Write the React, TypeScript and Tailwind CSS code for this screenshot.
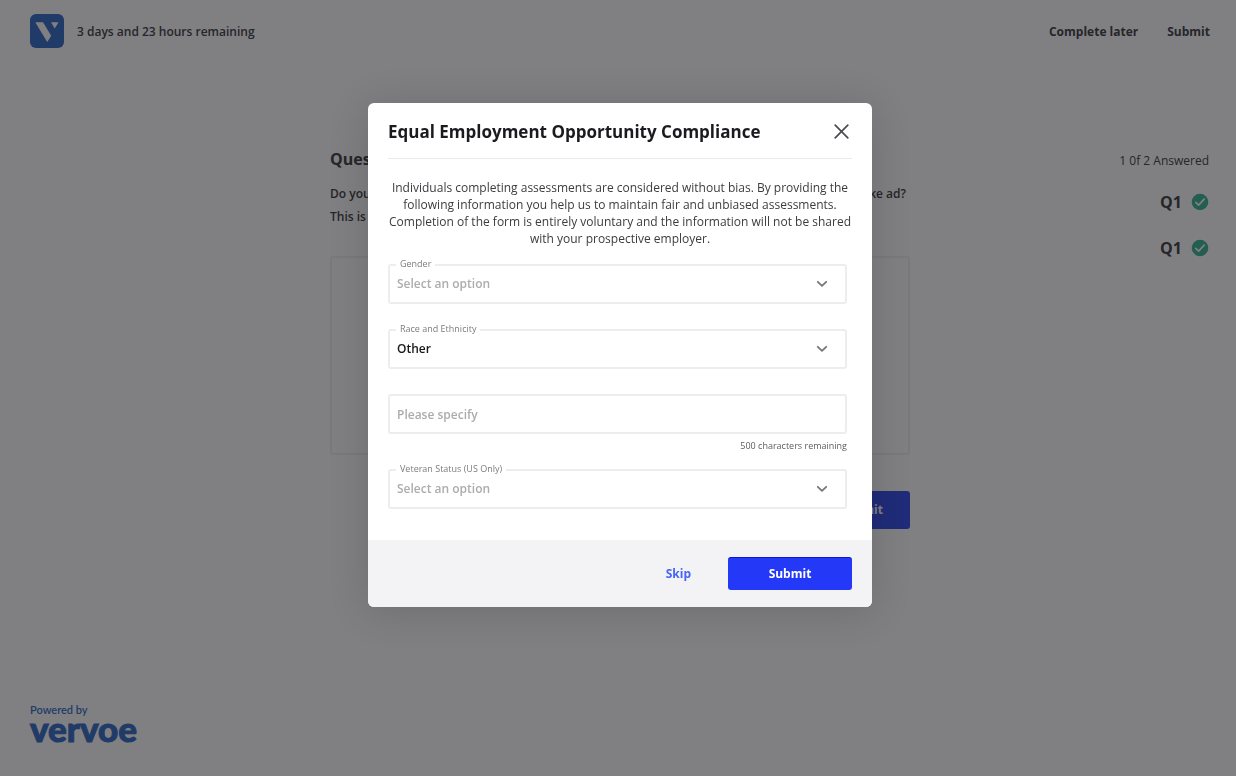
import { useState } from "react";

function BrandMark() {
  return (
    <svg viewBox="0 0 34 34" className="size-[34px]" aria-hidden="true">
      <rect width="34" height="34" rx="6" fill="#3f74c8" />
      <path d="M5.3 8.3h7.7l8.2 13.4-4 6.4z" fill="#fff" />
      <path d="M21 8.3h7.6l-3.9 6.3z" fill="#fff" />
    </svg>
  );
}

function CheckCircle() {
  return (
    <svg viewBox="0 0 18 18" className="size-[18px]" role="img" aria-label="Answered">
      <circle cx="9" cy="9" r="8.3" fill="#46bb9b" />
      <path d="M4.8 9.4l2.8 2.7 5.6-6" fill="none" stroke="#fff" strokeWidth="1.6" strokeLinecap="round" strokeLinejoin="round" />
    </svg>
  );
}

function Chevron() {
  return (
    <svg viewBox="0 0 12 8" className="pointer-events-none absolute right-[19px] top-4 h-2 w-3" aria-hidden="true">
      <path d="M1.8 1.8L6 5.8l4.2-4" fill="none" stroke="#77777b" strokeWidth="1.8" strokeLinecap="round" strokeLinejoin="round" />
    </svg>
  );
}

type SelectFieldProps = {
  id: string;
  label: string;
  options: string[];
  value: string;
  onChange: (value: string) => void;
};

function SelectField({ id, label, options, value, onChange }: SelectFieldProps) {
  return (
    <div className="relative">
      <label htmlFor={id} className="absolute -top-1.5 left-2 z-10 bg-white px-1 text-[9px] font-medium leading-3 text-[#7c7c80]">
        {label}
      </label>
      <select
        id={id}
        value={value}
        onChange={(e) => onChange(e.target.value)}
        className={`block h-10 w-full appearance-none rounded-[3px] border-2 border-[#ebedef] bg-white px-[7px] text-[12px] font-semibold ${value ? "text-[#18181b]" : "text-[#acacaf]"}`}
      >
        <option value="">Select an option</option>
        {options.map((o) => (
          <option key={o}>{o}</option>
        ))}
      </select>
      <Chevron />
    </div>
  );
}

function AssessmentPage() {
  return (
    <div className="flex min-h-screen flex-col bg-white text-[#4a4a50]">
      <header className="flex items-center justify-between pl-[30px] pr-[26px] pt-3.5">
        <div className="flex items-center gap-[13px]">
          <BrandMark />
          <span className="pt-0.5 text-[12px] font-semibold">3 days and 23 hours remaining</span>
        </div>
        <nav className="flex gap-[29px] pt-0.5 text-[12px] font-bold">
          <button type="button">Complete later</button>
          <button type="button">Submit</button>
        </nav>
      </header>

      <main className="grid grid-cols-[1fr_580px_1fr] pl-1 pt-[99px]">
        <section className="col-start-2">
          <h1 className="text-[16px] font-bold leading-6">Question 1</h1>
          <p className="mt-3 flex justify-between pr-1 text-[12px] font-semibold leading-[22px]">
            <span>Do you think</span>
            <span>you could write a Nike ad?</span>
          </p>
          <p className="text-[12px] font-semibold leading-6">This is a test</p>
          <textarea aria-label="Your answer" className="mt-[27px] block h-[199px] w-full resize-none rounded-[3px] border-2 border-[#f3f3f6]" />
          <div className="mt-9 flex justify-end">
            <button type="button" className="h-[38px] rounded-[3px] bg-[#4157ee] px-[27px] text-[12px] font-bold text-white">
              Submit
            </button>
          </div>
        </section>
        <aside className="flex flex-col items-end pr-[27px] pt-0.5">
          <p className="text-[12px] leading-6">1 0f 2 Answered</p>
          <ul className="mt-[17px] flex flex-col gap-[22px] text-[16px] font-bold leading-6">
            {[0, 1].map((i) => (
              <li key={i} className="flex items-center gap-[9px]">
                Q1
                <CheckCircle />
              </li>
            ))}
          </ul>
        </aside>
      </main>

      <footer className="mt-auto pb-9 pl-[30px] font-['Lato'] text-[#3f74c8]">
        <p className="text-[11px] font-semibold leading-3">Powered by</p>
        <p className="text-[35px] font-black leading-6 [-webkit-text-stroke:1px_#3f74c8]">vervoe</p>
      </footer>
    </div>
  );
}

export default function App() {
  const [gender, setGender] = useState("");
  const [race, setRace] = useState("Other");
  const [veteran, setVeteran] = useState("");
  const [detail, setDetail] = useState("");

  return (
    <div className="font-['Open_Sans','Noto_Sans',sans-serif]">
      <AssessmentPage />
      <div className="fixed inset-0 flex items-start justify-center overflow-auto bg-[#010106]/50 pb-6 pl-1 pt-[103px]">
        <form
          role="dialog"
          aria-modal="true"
          aria-labelledby="dialog-title"
          onSubmit={(e) => e.preventDefault()}
          className="w-full max-w-[504px] overflow-hidden rounded-md bg-white shadow-[0_4px_40px_rgba(0,0,0,0.15)]"
        >
          <div className="mx-5 flex h-14 items-center justify-between border-b border-[#ebebee] pr-[3px] pt-0.5">
            <h2 id="dialog-title" className="text-[17px] font-bold text-[#1b1b1f]">
              Equal Employment Opportunity Compliance
            </h2>
            <button type="button" aria-label="Close">
              <svg viewBox="0 0 15 15" className="size-[15px]" fill="none" stroke="#4b4b50" strokeWidth="1.7" strokeLinecap="round">
                <path d="M1.2 1.2l12.6 12.6M13.8 1.2L1.2 13.8" />
              </svg>
            </button>
          </div>

          <p className="px-5 pt-5 text-center text-[12px] leading-[17px] text-[#3c3c40]">
            Individuals completing assessments are considered without bias. By providing the following information you help us to maintain fair and unbiased assessments. Completion of the form is entirely voluntary and the information will not be shared with your prospective employer.
          </p>

          <div className="pb-[31px] pl-5 pr-[25px] pt-[17px]">
            <div className="flex flex-col gap-[25px]">
              <SelectField id="gender" label="Gender" value={gender} onChange={setGender} options={["Female", "Male", "Non-binary"]} />
              <SelectField id="race" label="Race and Ethnicity" value={race} onChange={setRace} options={["Asian", "Black", "Hispanic", "White", "Other"]} />
              <input
                aria-label="Please specify"
                placeholder="Please specify"
                maxLength={500}
                value={detail}
                onChange={(e) => setDetail(e.target.value)}
                className="block h-10 w-full rounded-[3px] border-2 border-[#ebedef] px-[7px] text-[12px] font-semibold text-[#18181b] placeholder:text-[#acacaf]"
              />
            </div>
            <p className="mb-[17px] mt-1.5 text-right text-[9px] font-medium leading-3 text-[#5c5c60]">{500 - detail.length} characters remaining</p>
            <SelectField id="veteran" label="Veteran Status (US Only)" value={veteran} onChange={setVeteran} options={["Veteran", "Not a veteran"]} />
          </div>

          <div className="flex items-center justify-end gap-[37px] bg-[#f3f3f5] px-5 py-[17px] text-[12px] font-bold">
            <button type="button" className="text-[#4465f5]">
              Skip
            </button>
            <button type="submit" className="h-[33px] w-[124px] rounded-[3px] border-t border-[#0d12dd] bg-[#2439f7] text-white">
              Submit
            </button>
          </div>
        </form>
      </div>
    </div>
  );
}
